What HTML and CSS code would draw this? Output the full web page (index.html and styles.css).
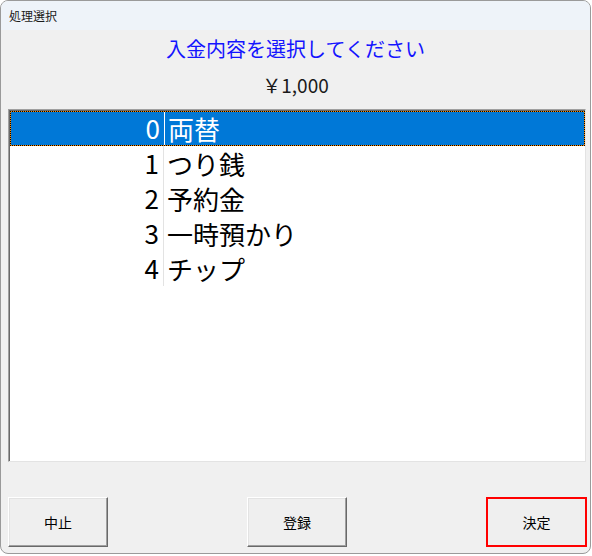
FILE: index.html
```html
<!DOCTYPE html>
<html lang="ja">
<head>
<meta charset="utf-8">
<title>処理選択</title>
<link rel="stylesheet" href="styles.css">
</head>
<body>
<div class="window">
  <div class="titlebar">処理選択</div>
  <div class="content">
    <div class="heading">入金内容を選択してください</div>
    <div class="price">￥1,000</div>
    <div class="listbox">
      <div class="row selected"><span class="num">0</span><span class="label">両替</span></div>
      <div class="row"><span class="num">1</span><span class="label">つり銭</span></div>
      <div class="row"><span class="num">2</span><span class="label">予約金</span></div>
      <div class="row"><span class="num">3</span><span class="label">一時預かり</span></div>
      <div class="row"><span class="num">4</span><span class="label">チップ</span></div>
    </div>
    <div class="buttons">
      <button class="btn">中止</button>
      <button class="btn">登録</button>
      <button class="btn primary">決定</button>
    </div>
  </div>
</div>
</body>
</html>
```

FILE: styles.css
```css
html, body {
  margin: 0;
  padding: 0;
  background: #ffffff;
}
body {
  font-family: "Noto Sans CJK JP", "Noto Sans", sans-serif;
}
.window {
  width: 589px;
  height: 552px;
  border: 1px solid #9a9a9a;
  border-radius: 8px;
  overflow: hidden;
  background: #f0f0f0;
  display: flex;
  flex-direction: column;
}
.titlebar {
  height: 29px;
  line-height: 29px;
  background: #eef3f9;
  font-size: 12px;
  color: #1a1a1a;
  padding-left: 8px;
}
.content {
  flex: 1;
  display: flex;
  flex-direction: column;
}
.heading {
  margin-top: 5px;
  height: 28px;
  line-height: 28px;
  text-align: center;
  font-size: 20px;
  color: #1414ff;
}
.price {
  margin-top: 10px;
  height: 24px;
  line-height: 24px;
  text-align: center;
  font-size: 19px;
  color: #1a1a1a;
}
.listbox {
  margin: 12px 4px 0 7px;
  height: 350px;
  background: #ffffff;
  border-top: 1px solid #a0a0a0;
  border-left: 1px solid #a0a0a0;
  border-right: 1px solid #e3e3e3;
  border-bottom: 1px solid #e3e3e3;
  box-shadow: inset 1px 1px 0 #696969;
  padding: 1px 0 0 1px;
}
.row {
  height: 35px;
  display: flex;
  align-items: center;
  font-size: 26px;
  color: #000;
  box-sizing: border-box;
}
.row.selected {
  background: #0078d7;
  color: #ffffff;
  border: 1px solid #ff8c00;
  outline: 1px dotted #000;
  outline-offset: -1px;
}
.num {
  width: 154px;
  box-sizing: border-box;
  text-align: right;
  padding-right: 4px;
  height: 100%;
  line-height: 34px;
  border-right: 1px solid #e3e3e3;
}
.row.selected .num {
  border-right-color: #ffffff;
  line-height: 32px;
}
.label {
  padding-left: 3px;
  line-height: 34px;
}
.row.selected .label {
  line-height: 32px;
}
.buttons {
  margin-top: 35px;
  display: flex;
  justify-content: space-between;
  padding: 0 3px 0 7px;
}
.btn {
  width: 100px;
  height: 50px;
  background: #efefef;
  font-family: "Noto Sans CJK JP", sans-serif;
  font-size: 14px;
  color: #000;
  border-top: 1px solid #ffffff;
  border-left: 1px solid #ffffff;
  border-right: 1px solid #696969;
  border-bottom: 1px solid #696969;
  box-shadow: inset -1px -1px 0 #a0a0a0, inset 1px 1px 0 #e3e3e3;
  padding: 0;
}
.btn.primary {
  width: 101px;
  border: 2px solid #ff0000;
  box-shadow: none;
}
```
